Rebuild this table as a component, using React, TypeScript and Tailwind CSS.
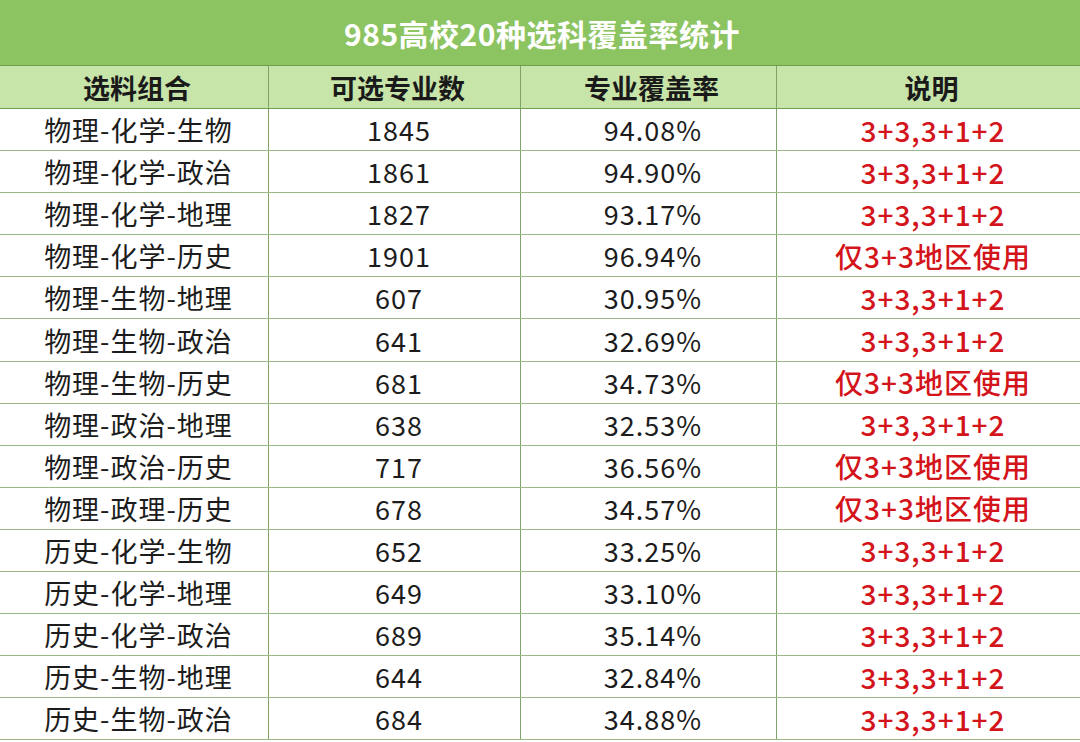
import React from "react";

const rows: [string, string, string, string][] = [
  ["物理-化学-生物", "1845", "94.08%", "3+3,3+1+2"],
  ["物理-化学-政治", "1861", "94.90%", "3+3,3+1+2"],
  ["物理-化学-地理", "1827", "93.17%", "3+3,3+1+2"],
  ["物理-化学-历史", "1901", "96.94%", "仅3+3地区使用"],
  ["物理-生物-地理", "607", "30.95%", "3+3,3+1+2"],
  ["物理-生物-政治", "641", "32.69%", "3+3,3+1+2"],
  ["物理-生物-历史", "681", "34.73%", "仅3+3地区使用"],
  ["物理-政治-地理", "638", "32.53%", "3+3,3+1+2"],
  ["物理-政治-历史", "717", "36.56%", "仅3+3地区使用"],
  ["物理-政理-历史", "678", "34.57%", "仅3+3地区使用"],
  ["历史-化学-生物", "652", "33.25%", "3+3,3+1+2"],
  ["历史-化学-地理", "649", "33.10%", "3+3,3+1+2"],
  ["历史-化学-政治", "689", "35.14%", "3+3,3+1+2"],
  ["历史-生物-地理", "644", "32.84%", "3+3,3+1+2"],
  ["历史-生物-政治", "684", "34.88%", "3+3,3+1+2"],
];

const cols = "grid grid-cols-[269px_252px_256px_303px]";
const font = { fontFamily: '"Noto Sans CJK SC", "Noto Sans", sans-serif' };

export default function App() {
  return (
    <div className="w-[1080px] h-[742px] bg-white overflow-hidden" style={font}>
      <div className="h-[66px] bg-[#8dc462] border-b border-[#6f9f4c] flex items-center justify-center pl-[4px]">
        <span className="text-white text-[30px] font-bold tracking-[0.5px] leading-none">985高校20种选科覆盖率统计</span>
      </div>
      <div className={`${cols} h-[43px] bg-[#c7e5a9] border-b border-[#6f9f4c]`}>
        {["选料组合", "可选专业数", "专业覆盖率", "说明"].map((h, i) => (
          <div
            key={h}
            className={`flex items-center justify-center text-[27px] font-bold text-[#1a1a1a] leading-none pl-[6px] ${i < 3 ? "border-r border-[#7fa366]" : ""}`}
          >
            {h}
          </div>
        ))}
      </div>
      {rows.map((r, ri) => (
        <div key={ri} className={`${cols} h-[42.1px] border-b border-[#9ab888]`}>
          {r.map((c, i) => (
            <div
              key={i}
              className={`flex items-center justify-center leading-none pl-[9px] tracking-[1px] ${i < 3 ? "border-r border-[#7fa366]" : ""} ${i === 3 ? "text-[#d3141b] text-[28px] font-medium" : "text-[#1c1c1c] text-[27px]"}`}
            >
              {c}
            </div>
          ))}
        </div>
      ))}
    </div>
  );
}
